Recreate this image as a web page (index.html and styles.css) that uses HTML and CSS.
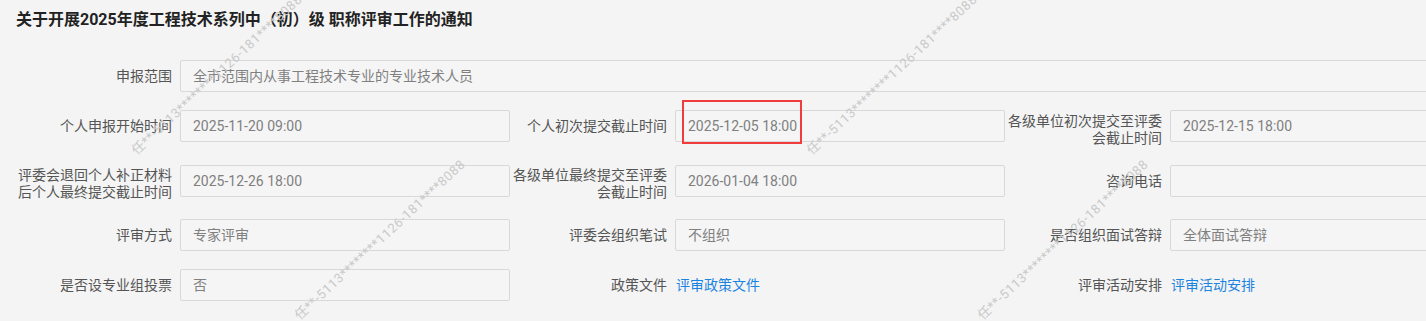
FILE: index.html
```html
<!DOCTYPE html>
<html lang="zh-CN">
<head>
  <meta charset="UTF-8">
  <meta name="viewport" content="width=device-width, initial-scale=1.0">
  <title>职称评审工作通知</title>
  <link rel="stylesheet" href="styles.css">
</head>
<body>

  <div class="page">
    <h3 class="title">关于开展2025年度工程技术系列中（初）级 职称评审工作的通知</h3>

    <div class="form">
      <div class="row">
        <div class="field full"><label>申报范围</label><div class="val">全市范围内从事工程技术专业的专业技术人员</div></div>
      </div>

      <div class="row">
        <div class="field"><label>个人申报开始时间</label><div class="val">2025-11-20 09:00</div></div>
        <div class="field"><label>个人初次提交截止时间</label><div class="val">2025-12-05 18:00<span class="mark"></span></div></div>
        <div class="field"><label class="two">各级单位初次提交至评委会截止时间</label><div class="val">2025-12-15 18:00</div></div>
      </div>

      <div class="row">
        <div class="field"><label class="two">评委会退回个人补正材料后个人最终提交截止时间</label><div class="val">2025-12-26 18:00</div></div>
        <div class="field"><label class="two">各级单位最终提交至评委会截止时间</label><div class="val">2026-01-04 18:00</div></div>
        <div class="field"><label>咨询电话</label><div class="val"></div></div>
      </div>

      <div class="row">
        <div class="field"><label>评审方式</label><div class="val">专家评审</div></div>
        <div class="field"><label>评委会组织笔试</label><div class="val">不组织</div></div>
        <div class="field"><label>是否组织面试答辩</label><div class="val">全体面试答辩</div></div>
      </div>

      <div class="row">
        <div class="field"><label>是否设专业组投票</label><div class="val">否</div></div>
        <div class="field"><label>政策文件</label><a class="link" href="#">评审政策文件</a></div>
        <div class="field"><label>评审活动安排</label><a class="link" href="#">评审活动安排</a></div>
      </div>
    </div>
  </div>

  <!-- 水印 -->
  <div class="wm">
    <span class="wm1">任**-5113********1126-181****8088</span>
    <span class="wm2">任**-5113********1126-181****8088</span>
    <span class="wm3">任**-5113********1126-181****8088</span>
    <span class="wm4">任**-5113********1126-181****8088</span>
  </div>

</body>
</html>
```

FILE: styles.css
```css
body{
  margin:0;background:#f4f4f4;color:#555;overflow:hidden;
  font-family:Roboto,"Noto Sans CJK SC",sans-serif;font-size:14px;
}
.page{padding:10px 0 0 15px;width:1500px}
.title{
  margin:0 0 30px 1px;font-size:16px;line-height:20px;font-weight:bold;color:#222;
}
.row{display:flex;align-items:flex-start;margin-bottom:18px}
.field{display:flex;align-items:flex-start;width:495px}
.field.full{width:1485px}
.field label{
  width:165px;flex:none;box-sizing:border-box;padding-right:8px;
  text-align:right;line-height:32px;color:#555;
}
.field label.two{padding-top:2.5px;line-height:17px}
.val{
  position:relative;width:330px;height:32px;box-sizing:border-box;
  border:1px solid #d8d8d8;border-radius:2px;background:#f5f5f5;
  padding:0 12px;line-height:30px;color:#808080;white-space:nowrap;
}
.field.full .val{flex:1;width:auto}
.link{line-height:32px;padding-left:1px;color:#1b84e0;text-decoration:none}

/* 标注框 */
.mark{
  position:absolute;left:6px;top:-11px;width:120px;height:44px;
  box-sizing:border-box;border:2px solid #f03c3c;
}

.wm{position:absolute;left:0;top:0;width:100%;height:100%;pointer-events:none}
.wm span{
  position:absolute;font-size:13px;line-height:13px;letter-spacing:.6px;
  color:#cacaca;white-space:nowrap;
  transform:rotate(-43deg);transform-origin:0 100%;
}
.wm1{left:138px;top:144px}
.wm2{left:813px;top:144px}
.wm3{left:301px;top:309px}
.wm4{left:984px;top:309px}
```
